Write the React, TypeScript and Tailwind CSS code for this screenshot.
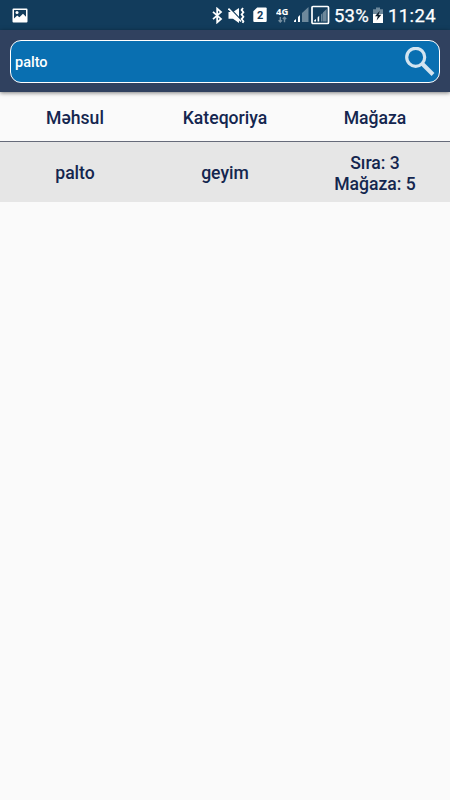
import React from 'react';

interface Product {
  name: string;
  category: string;
  row: number;
  store: number;
}

const products: Product[] = [{ name: 'palto', category: 'geyim', row: 3, store: 5 }];

const PictureIcon = () => (
  <svg width="16" height="16" viewBox="0 0 16 16">
    <path fillRule="evenodd" fill="#fff" d="M1.5 0.5h13a1 1 0 0 1 1 1v12a1 1 0 0 1-1 1h-13a1 1 0 0 1-1-1v-12a1 1 0 0 1 1-1zM2 2v8.5l3.2-3.1 2.2 1.8L11 5.8l3 3V2z" />
    <circle cx="5" cy="4.5" r="1.5" fill="#fff" />
  </svg>
);

const BluetoothIcon = () => (
  <svg width="11" height="17" viewBox="0 0 11 17" fill="none" stroke="#fff" strokeWidth="1.8">
    <path d="M1 4.8l8 7.1-3.8 3.4V1.7L9 5.1l-8 7.1" />
  </svg>
);

const MuteIcon = () => (
  <svg width="18" height="17" viewBox="0 0 18 17">
    <path fill="#fff" d="M0.5 5h4.5L11 1v15L5 11.8H0.5z" />
    <path d="M1.8 1l11 11.8" stroke="#123c5c" strokeWidth="1.4" />
    <path d="M0.5 1.5l12.5 13" stroke="#fff" strokeWidth="1.6" />
    <path d="M15 1l-1.4 2 1.8 2.2-1.8 2.3 1.8 2.3-1.8 2.3 1.8 2.2-0.8 1.5" fill="none" stroke="#fff" strokeWidth="1.8" />
  </svg>
);

const SimIcon = () => (
  <svg width="14" height="16" viewBox="0 0 14 16">
    <path fill="#fff" d="M4.2 0.5h8.5a1 1 0 0 1 1 1v12.5a1 1 0 0 1-1 1H1.3a1 1 0 0 1-1-1V4.3z" />
    <text x="7.2" y="12" textAnchor="middle" fontSize="11" fontWeight="700" fontFamily="Roboto, sans-serif" fill="#123c5c">2</text>
  </svg>
);

const DataIcon = () => (
  <svg width="14" height="18" viewBox="0 0 14 18">
    <text x="0" y="9" fontSize="9.5" fontWeight="700" fontFamily="'Open Sans', sans-serif" fill="#fff" textLength="12.5">4G</text>
    <path d="M4.3 11v5M2.6 14.3l1.7 1.8L6 14.3M8.5 16.3v-5M6.8 13l1.7-1.8 1.7 1.8" fill="none" stroke="#7891a3" strokeWidth="1.4" />
  </svg>
);

const SignalIcon = () => (
  <svg width="15" height="16" viewBox="0 0 15 16">
    <path fill="#fff" d="M0 15v-1.2L2 12v3zM4 15v-5L6 8v7z" />
    <path fill="#6d889b" d="M8 15V6l2.2-2v11zM10.2 15V4L14.5 0v15z" />
  </svg>
);

const BoxedSignalIcon = () => (
  <svg width="19" height="20" viewBox="0 0 19 20">
    <rect x="1" y="1.5" width="16.5" height="17" rx="1" fill="none" stroke="#fff" strokeWidth="1.7" />
    <path fill="#fff" d="M3.2 16.5v-1.3L5 14v2.5zM6.6 16.5v-4l1.6-1.7v5.7z" />
    <path fill="#6d889b" d="M10 16.5V9.4L11.6 8v8.5zM12 16.5V7.5L15.6 4v12.5z" />
  </svg>
);

const BatteryIcon = () => (
  <svg width="10" height="17" viewBox="0 0 10 17">
    <path fill="#6d889b" d="M3 0.5h4v1.8h3V8H0V2.3h3z" />
    <path fill="#fff" d="M0 7h10v9H0z" />
    <path fill="#0b1c2b" d="M6.8 3.8L2 9.2h2.8L3.6 13.4l4.8-5.6H5.6z" />
  </svg>
);

const StatusBar = () => (
  <div className="flex h-[30px] items-center bg-[#123c5c] pl-3 pr-[13px] text-white">
    <div className="mt-px"><PictureIcon /></div>
    <div className="ml-auto flex items-center">
      <BluetoothIcon />
      <div className="ml-[5px]"><MuteIcon /></div>
      <div className="ml-[7px]"><SimIcon /></div>
      <div className="ml-[9px]"><DataIcon /></div>
      <div className="ml-1"><SignalIcon /></div>
      <div className="ml-[2px]"><BoxedSignalIcon /></div>
      <span className="ml-1 w-[36px] whitespace-nowrap pt-[2px] text-[18.5px] leading-[30px] tracking-[0.2px] [-webkit-text-stroke:0.25px_white]">53%</span>
      <div className="ml-[3px]"><BatteryIcon /></div>
      <span className="ml-[5px] w-[49px] whitespace-nowrap pt-[2px] text-[18.5px] leading-[30px] tracking-[0.4px] [-webkit-text-stroke:0.25px_white]">11:24</span>
    </div>
  </div>
);

const SearchBar = () => (
  <header className="relative h-[62px] bg-[#30415f] px-[10px] pt-[10px] shadow-[0_1px_4px_rgba(0,0,0,0.5)]">
    <div className="flex h-[43px] items-center justify-between rounded-[11px] border-[1.5px] border-white bg-[#096fb1] pl-1 pr-1">
      <span className="pt-[3px] text-[14.5px] font-medium text-white">palto</span>
      <svg width="30" height="30" viewBox="0 0 30 30" fill="none" stroke="#d3e4f0">
        <circle cx="10.7" cy="10.3" r="9" strokeWidth="3.2" />
        <path d="M17 16.5l11 11" strokeWidth="4" />
      </svg>
    </div>
  </header>
);

const App: React.FC = () => (
  <div className="flex h-[800px] w-[450px] flex-col overflow-hidden bg-[#fafafa] font-[Roboto,'Noto_Sans',sans-serif]">
    <StatusBar />
    <SearchBar />
    <div className="text-center text-[17.6px] font-medium leading-[21px] text-[#14264f]">
      <div className="grid h-[50px] grid-cols-3 items-center border-b border-[#666b7a] pt-[3px]">
        <span>Məhsul</span>
        <span>Kateqoriya</span>
        <span>Mağaza</span>
      </div>
      {products.map(item => (
        <div key={item.name} className="grid h-[60px] grid-cols-3 items-center bg-[#e6e6e6] pt-[2px]">
          <span>{item.name}</span>
          <span>{item.category}</span>
          <span className="pt-px">
            Sıra: {item.row}
            <br />
            Mağaza: {item.store}
          </span>
        </div>
      ))}
    </div>
  </div>
);

export default App;
